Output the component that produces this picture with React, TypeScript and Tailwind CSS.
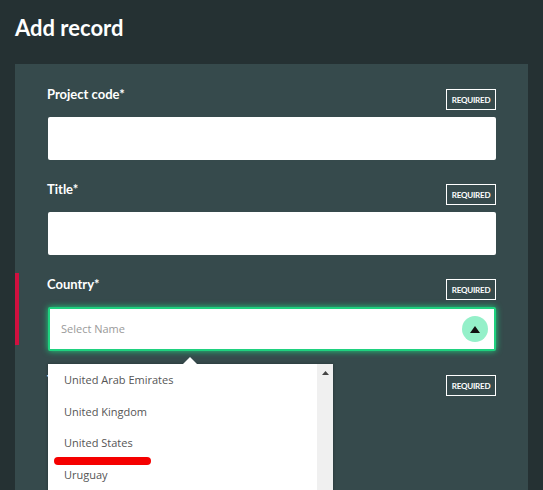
export default function App() {
  const Badge = () => (
    <span className="border border-white text-white text-[8px] font-bold px-[3px] h-[21px] w-[50px] flex items-center justify-center tracking-tight">REQUIRED</span>
  );
  const Field = ({ label, children, mark }: { label: string; children?: any; mark?: boolean }) => (
    <div className="relative px-8">
      {mark && <div className="absolute left-0 top-[-6px] w-[4px] h-[72px] bg-[#d0103f]" />}
      <div className="flex justify-between items-start h-[28px]">
        <span className="text-white font-bold text-[13px] leading-none mt-[-1px]">{label}</span>
        <Badge />
      </div>
      {children}
    </div>
  );
  return (
    <div className="w-[543px] h-[490px] overflow-hidden bg-[#253133] relative" style={{ fontFamily: "'Open Sans', Lato, sans-serif" }}>
      <div className="px-[15px] pt-[13px] h-[64px]">
        <h1 className="text-white text-[22px] font-bold leading-[30px]" style={{ fontFamily: "Lato, sans-serif" }}>Add record</h1>
      </div>
      <div className="mx-[15px] bg-[#364a4c] h-[426px] pt-[25px] flex flex-col gap-[24px]" style={{ fontFamily: "Lato, sans-serif" }}>
        <Field label="Project code*"><div className="h-[43px] bg-white rounded-[2px] ml-[1px]" /></Field>
        <Field label="Title*"><div className="h-[43px] bg-white rounded-[2px] ml-[1px]" /></Field>
        <Field label="Country*" mark>
          <div className="h-[44px] bg-white rounded-[2px] ml-[1px] border-2 border-[#1fd17f] shadow-[0_0_6px_#1fd17f] flex items-center justify-between pl-[11px] pr-[6px]">
            <span className="text-[#9a9a9a] text-[11px]" style={{ fontFamily: "'Open Sans', sans-serif" }}>Select Name</span>
            <span className="w-[26px] h-[26px] rounded-full bg-[#94f0c9] flex items-center justify-center">
              <svg width="10" height="7" viewBox="0 0 10 7"><path d="M5 0L10 7H0Z" fill="#111" /></svg>
            </span>
          </div>
        </Field>
        <Field label="T"><div className="h-[43px]" /></Field>
      </div>
      <div className="absolute left-[48px] top-[364px] w-[285px] h-[140px] bg-white shadow-[0_0_3px_rgba(0,0,0,0.3)] flex" style={{ fontFamily: "'Open Sans', sans-serif" }}>
        <div className="absolute left-[135px] top-[-7px] w-0 h-0 border-x-[7px] border-x-transparent border-b-[7px] border-b-white" />
        <div className="flex-1 pt-[8px] pl-[16px] flex flex-col text-[11px] text-[#555]">
          <div className="h-[32px]">United Arab Emirates</div>
          <div className="h-[31px]">United Kingdom</div>
          <div className="h-[32px]">United States</div>
          <div className="h-[32px]">Uruguay</div>
        </div>
        <div className="w-[16px] bg-[#f0f0f0] flex justify-center pt-[7px]">
          <svg width="7" height="4" viewBox="0 0 7 4"><path d="M3.5 0L7 4H0Z" fill="#444" /></svg>
        </div>
        <div className="absolute left-[6px] top-[93px] w-[97px] h-[8px] rounded-full bg-[#f50000]" />
      </div>
    </div>
  );
}
